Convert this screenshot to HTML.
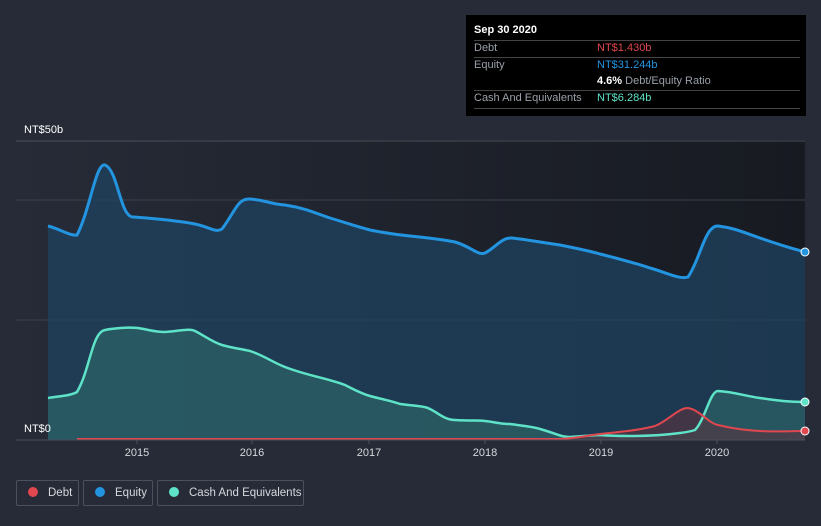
<!DOCTYPE html>
<html><head><meta charset="utf-8"><style>
html,body{margin:0;background:#262b37;font-family:"Liberation Sans",sans-serif;width:821px;height:526px;overflow:hidden;position:relative}
.tt{position:absolute;left:466px;top:15px;width:340px;height:101px;background:#000;color:#fff;font-size:11px}
.tt .r{position:absolute;left:8px;right:6px;border-top:1px solid #444}
.lab{position:absolute;color:#9aa0a8}
.leg{position:absolute;top:480px;height:26px;border:1px solid #4a505c;border-radius:2px;color:#d6d8dc;font-size:11.5px;line-height:24px;box-sizing:border-box;white-space:nowrap;overflow:hidden}
.leg i{display:inline-block;width:10px;height:10px;border-radius:50%;margin:0 10px 0 11px;vertical-align:-1px}
</style></head><body>
<svg width="821" height="526" style="position:absolute;left:0;top:0">
<defs><linearGradient id="bg" x1="0" x2="1"><stop offset="0" stop-color="#262b37"/><stop offset="1" stop-color="#171a21"/></linearGradient></defs>
<rect x="16" y="140" width="789" height="300" fill="url(#bg)"/>
<line x1="16" y1="141" x2="805" y2="141" stroke="#4a505c"/>
<line x1="16" y1="200" x2="805" y2="200" stroke="#3a404c"/>
<line x1="16" y1="320" x2="805" y2="320" stroke="#3a404c"/>
<path d="M48,226 C60,229 70,236 77,235 C90,210 96,162 105,165 C118,170 120,217 133,217 C150,218 180,221 195,224 C210,227 215,233 222,229 C236,210 238,198 250,199 C265,200 270,204 285,205 C305,208 315,213 330,218 C350,224 355,226 370,230 C390,234 400,235 410,236 C430,238 445,240 455,242 C470,246 478,256 485,253 C495,248 502,237 512,238 C530,240 545,243 560,245 C580,249 590,251 600,254 C620,259 635,263 650,268 C665,272 680,280 688,277 C700,260 705,225 718,226 C735,228 745,233 760,238 C780,245 790,248 805,252 L805,440 L48,440Z" fill="#1f4360" fill-opacity="0.75" stroke="none"/>
<path d="M48,226 C60,229 70,236 77,235 C90,210 96,162 105,165 C118,170 120,217 133,217 C150,218 180,221 195,224 C210,227 215,233 222,229 C236,210 238,198 250,199 C265,200 270,204 285,205 C305,208 315,213 330,218 C350,224 355,226 370,230 C390,234 400,235 410,236 C430,238 445,240 455,242 C470,246 478,256 485,253 C495,248 502,237 512,238 C530,240 545,243 560,245 C580,249 590,251 600,254 C620,259 635,263 650,268 C665,272 680,280 688,277 C700,260 705,225 718,226 C735,228 745,233 760,238 C780,245 790,248 805,252" fill="none" stroke="#2394df" stroke-width="3"/>
<path d="M48,398 C60,396 70,396 77,392 C90,370 92,332 105,330 C115,328 130,327 138,328 C150,330 155,332 165,332 C180,331 190,328 195,331 C205,336 212,342 222,345 C232,348 242,349 250,351 C265,356 272,362 285,367 C305,375 330,379 345,385 C355,390 360,393 370,396 C385,400 392,401 400,404 C415,406 425,406 430,409 C440,414 445,420 455,420 C470,421 478,420 485,421 C495,422 500,424 510,424 C525,426 535,427 540,429 C555,433 560,437 570,437 C585,436 595,435 600,435 C612,436 620,436 630,436 C650,436 665,435 680,433 C688,432 692,431 695,430 C705,420 710,391 718,391 C735,392 745,396 760,398 C780,401 790,402 805,402 L805,440 L48,440Z" fill="#2f6a6a" fill-opacity="0.6"/>
<path d="M560,439 C580,438 590,435 600,434 C620,432 640,430 655,426 C668,421 678,408 688,408 C700,410 708,423 718,425 C735,429 745,430 760,431 C780,432 790,431 805,431 L805,440 L560,440Z" fill="#5a3440" fill-opacity="0.6"/>
<path d="M48,398 C60,396 70,396 77,392 C90,370 92,332 105,330 C115,328 130,327 138,328 C150,330 155,332 165,332 C180,331 190,328 195,331 C205,336 212,342 222,345 C232,348 242,349 250,351 C265,356 272,362 285,367 C305,375 330,379 345,385 C355,390 360,393 370,396 C385,400 392,401 400,404 C415,406 425,406 430,409 C440,414 445,420 455,420 C470,421 478,420 485,421 C495,422 500,424 510,424 C525,426 535,427 540,429 C555,433 560,437 570,437 C585,436 595,435 600,435 C612,436 620,436 630,436 C650,436 665,435 680,433 C688,432 692,431 695,430 C705,420 710,391 718,391 C735,392 745,396 760,398 C780,401 790,402 805,402" fill="none" stroke="#5ee3c8" stroke-width="2.5"/>
<path d="M77,439 L560,439 C580,438 590,435 600,434 C620,432 640,430 655,426 C668,421 678,408 688,408 C700,410 708,423 718,425 C735,429 745,430 760,431 C780,432 790,431 805,431" fill="none" stroke="#e0474f" stroke-width="2"/>
<line x1="16" y1="440" x2="805" y2="440" stroke="#4a505c"/>
<g stroke="#4a505c"><line x1="137" y1="440" x2="137" y2="444"/><line x1="252" y1="440" x2="252" y2="444"/><line x1="369" y1="440" x2="369" y2="444"/><line x1="485" y1="440" x2="485" y2="444"/><line x1="601" y1="440" x2="601" y2="444"/><line x1="717" y1="440" x2="717" y2="444"/></g>
<circle cx="805" cy="252" r="4" fill="#2394df" stroke="#fff" stroke-width="1"/>
<circle cx="805" cy="402" r="4" fill="#5ee3c8" stroke="#fff" stroke-width="1"/>
<circle cx="805" cy="431" r="4" fill="#e0474f" stroke="#fff" stroke-width="1"/>
<g fill="#d6d8dc" font-size="11" font-family="Liberation Sans" text-anchor="middle">
<text x="137" y="456">2015</text><text x="252" y="456">2016</text><text x="369" y="456">2017</text><text x="485" y="456">2018</text><text x="601" y="456">2019</text><text x="717" y="456">2020</text></g>
<g fill="#fff" font-size="11" font-family="Liberation Sans"><text x="24" y="133">NT$50b</text><text x="24" y="432">NT$0</text></g>
</svg>
<div class="tt">
<div style="position:absolute;left:8px;top:9px;font-weight:bold">Sep 30 2020</div>
<div class="r" style="top:25px"></div>
<div class="lab" style="left:8px;top:27px">Debt</div><div style="position:absolute;left:131px;top:27px;color:#e0474f">NT$1.430b</div>
<div class="r" style="top:42px"></div>
<div class="lab" style="left:8px;top:44px">Equity</div><div style="position:absolute;left:131px;top:44px;color:#2394df">NT$31.244b</div>
<div style="position:absolute;left:131px;top:60px"><b>4.6%</b> <span style="color:#9aa0a8">Debt/Equity Ratio</span></div>
<div class="r" style="top:75px"></div>
<div class="lab" style="left:8px;top:77px">Cash And Equivalents</div><div style="position:absolute;left:131px;top:77px;color:#5ee3c8">NT$6.284b</div>
<div class="r" style="top:93px"></div>
</div>
<div class="leg" style="left:16px;width:63px"><i style="background:#e0474f"></i>Debt</div>
<div class="leg" style="left:83px;width:70px"><i style="background:#2394df"></i>Equity</div>
<div class="leg" style="left:157px;width:147px"><i style="background:#5ee3c8"></i>Cash And Equivalents</div>
</body></html>
